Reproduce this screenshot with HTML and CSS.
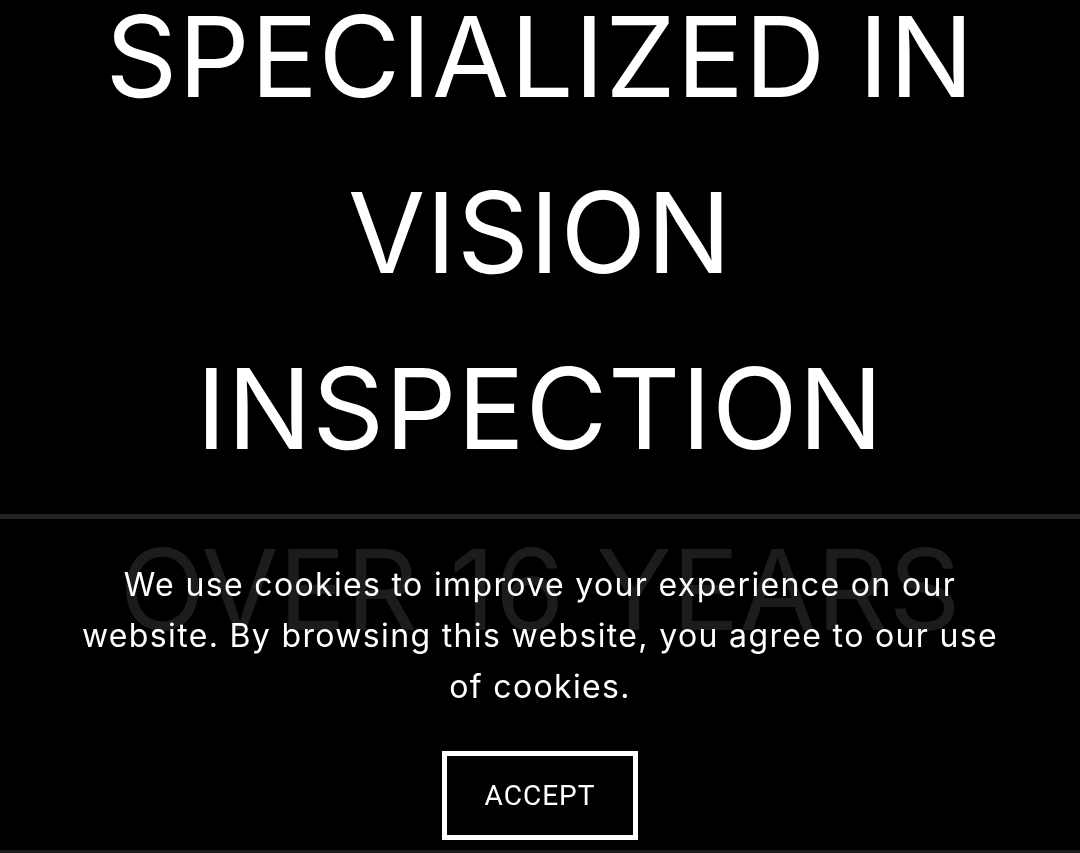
FILE: index.html
```html
<!DOCTYPE html>
<html lang="en">
<head>
<meta charset="utf-8">
<title>Vision Inspection</title>
<link rel="stylesheet" href="styles.css">
</head>
<body>
<main class="page">
  <section class="hero">
    <h1 class="hero-title">SPECIALIZED IN<br>VISION<br>INSPECTION</h1>
  </section>
  <div class="divider"></div>
  <section class="stats">
    <h2 class="stats-title">OVER 16 YEARS</h2>
  </section>
</main>
<div class="cookie-banner">
  <p class="cookie-text">We use cookies to improve your experience on our website. By browsing this website, you agree to our use of cookies.</p>
  <button class="cookie-accept" type="button">ACCEPT</button>
</div>
<div class="bottom-band"></div>
</body>
</html>
```
FILE: styles.css
```css
html, body {
  margin: 0;
  padding: 0;
  background: #000;
  overflow: hidden;
  height: 853px;
}
.page {
  display: flex;
  flex-direction: column;
}
.hero {
  margin-top: -32px;
  text-align: center;
}
.hero-title {
  margin: 0;
  font-family: "Inter", "Liberation Sans", sans-serif;
  font-weight: 400;
  font-size: 112px;
  line-height: 176px;
  letter-spacing: 0.8px;
  color: #fff;
}
.divider {
  margin-top: 18px;
  height: 5px;
  background: #222;
}
.stats {
  text-align: center;
}
.stats-title {
  margin: 5px 0 0;
  font-family: "Inter", "Liberation Sans", sans-serif;
  font-weight: 400;
  font-size: 112px;
  line-height: 130px;
  letter-spacing: 0;
  color: #1c1c1c;
}
.cookie-banner {
  position: fixed;
  left: 0;
  right: 0;
  top: 519px;
  bottom: 3px;
  display: flex;
  flex-direction: column;
  align-items: center;
  padding: 40px 72px 0;
  box-sizing: border-box;
}
.cookie-text {
  margin: 0;
  font-family: "Inter", "Liberation Sans", sans-serif;
  font-size: 32px;
  line-height: 51px;
  letter-spacing: 1.35px;
  color: #fff;
  text-align: center;
}
.cookie-accept {
  margin-top: 39px;
  width: 196px;
  height: 89px;
  border: 5px solid #fff;
  background: #000;
  color: #fff;
  font-family: "Roboto", "Liberation Sans", sans-serif;
  font-size: 28px;
  letter-spacing: 1px;
  padding: 0;
}
.bottom-band {
  position: fixed;
  left: 0;
  right: 0;
  bottom: 0;
  height: 3px;
  background: #1c1c1c;
}
```
